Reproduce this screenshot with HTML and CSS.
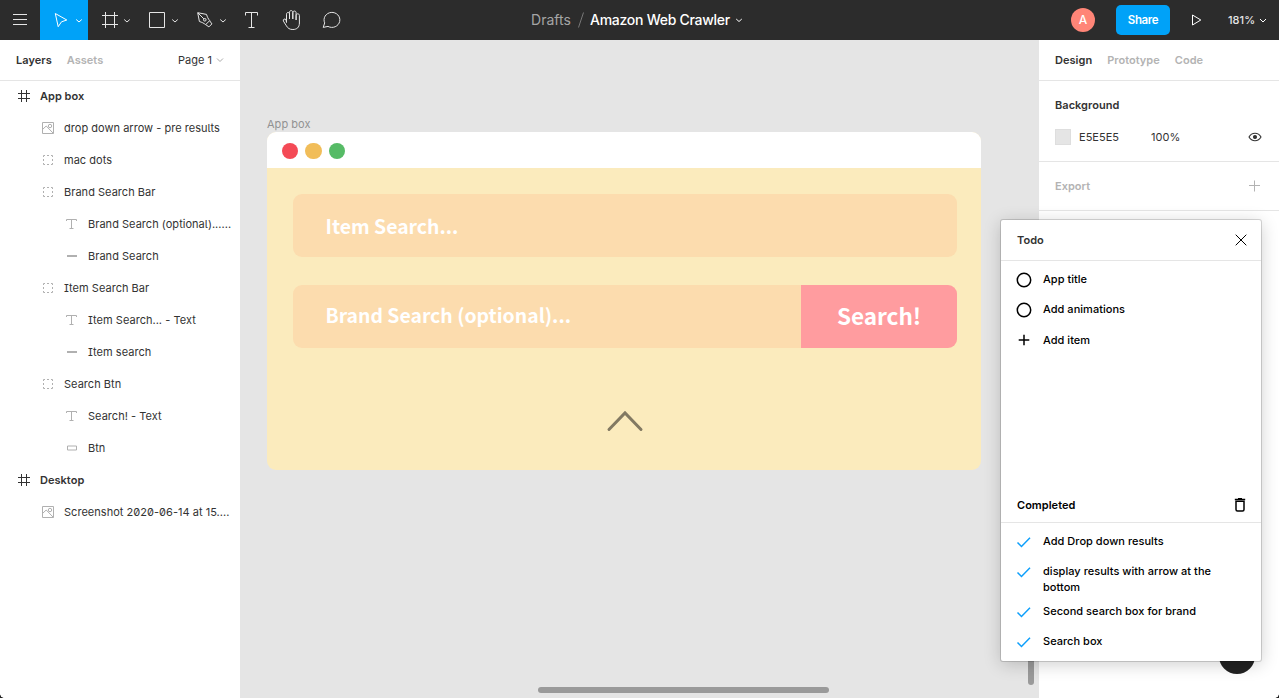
FILE: index.html
```html
<!DOCTYPE html>
<html lang="en">
<head>
<meta charset="utf-8">
<title>Amazon Web Crawler</title>
<link rel="stylesheet" href="styles.css">
</head>
<body>
<svg class="defs" aria-hidden="true">
  <symbol id="frame" viewBox="0 0 16 16"><path d="M5.5 2v12M10.5 2v12M2 5.5h12M2 10.5h12"/></symbol>
  <symbol id="image" viewBox="0 0 16 16"><path d="M2.5 2.5h11v11h-11zM3 9l3.2-3 7 7.2"/><circle cx="10" cy="6" r="1.7"/></symbol>
  <symbol id="group" viewBox="0 0 16 16"><path d="M3.5 5V3.500H5M7 3.500h2M11 3.500h1.500V5M12.500 7v2M12.500 11v1.500H11M9 12.500H7M5 12.500H3.500V11M3.500 9V7"/></symbol>
  <symbol id="text" viewBox="0 0 16 16"><path d="M2.500 5V3.500h10V5M7.500 3.500v9M5.500 12.500h4"/></symbol>
  <symbol id="line" viewBox="0 0 16 16"><path d="M3 8h10" stroke-width="2"/></symbol>
  <symbol id="bar" viewBox="0 0 16 16"><path d="M3.500 6h9v4h-9z"/></symbol>
  <symbol id="check" viewBox="0 0 16 16"><path d="M1.500 8.500l4 4L14 3.800" stroke-width="1.500"/></symbol>
</svg>
<div class="app">
  <header class="toolbar">
    <svg class="tool tool-sm" viewBox="0 0 40 40"><path d="M13 14.500h14M13 19.500h14M13 24.500h14"/></svg>
    <svg class="tool active" viewBox="0 0 48 40"><path d="M15.300 13.500L26.800 20l-5.300 1.800-3.300 4.900z"/><path d="M36.200 19.500L39 22l2.800-2.500"/></svg>
    <svg class="tool" viewBox="0 0 48 40"><path d="M17.500 12v16M26.500 12v16M14 15.500h16M14 24.500h16"/><path d="M36.200 19.500L39 22l2.800-2.500"/></svg>
    <svg class="tool" viewBox="0 0 48 40"><path d="M13.500 12.500h15v15h-15z"/><path d="M36.200 19.500L39 22l2.800-2.500"/></svg>
    <svg class="tool" viewBox="0 0 48 40"><path d="M13.700 12.700l8.800 1.700c.8 2.500 1.600 4.400 3.200 6.200l-4.100 4.100c-1.800-1.600-3.700-2.400-6.200-3.200zM13.900 12.900l6 6M25.600 20.700l2.300 3.200-3 3-3.200-2.300"/><circle cx="20.800" cy="19.800" r="1.300"/><path d="M36.200 19.500L39 22l2.800-2.500"/></svg>
    <svg class="tool tool-sm" viewBox="0 0 40 40"><path d="M13.500 15.500v-3h12v3M19.500 12.500v15M16.500 27.500h6"/></svg>
    <svg class="tool tool-sm" viewBox="0 0 40 40"><path d="M14.500 22.500v-8.300c0-2.300 3-2.300 3 0V19v-6.700c0-2.300 3.300-2.300 3.300 0V19v-6.300c0-2.200 3.300-2.200 3.300 0V20v-4.600c0-2.100 3.300-2.100 3.300 0V23c0 4.300-2.500 6.500-6.500 6.500-3.400 0-5-1.200-6.500-3.700l-3-4.700c-.8-2 1.500-2.800 2.600-1.400z"/></svg>
    <svg class="tool tool-sm" viewBox="0 0 40 40"><path d="M11.200 27.400l1.500-4.500a7.900 7.500 0 1 1 3.300 3.500z"/></svg>
    <div class="file"><span class="drafts">Drafts</span><svg class="slash" viewBox="0 0 8 16"><path d="M1.500 15.500L6.500.5"/></svg><span class="name">Amazon Web Crawler</span><svg class="chev" viewBox="0 0 8 8"><path d="M1.200 3L4 5.500 6.800 3"/></svg></div>
    <span class="avatar">A</span>
    <span class="share">Share</span>
    <svg class="play" viewBox="0 0 12 12"><path d="M1.500 1L9.800 6 1.500 11z"/></svg>
    <span class="zoom">181%</span><svg class="chev zoom-chev" viewBox="0 0 8 8"><path d="M1 3l3 3 3-3"/></svg>
  </header>
  <div class="main">
    <aside class="layers">
      <div class="tabs"><b>Layers</b><b class="off">Assets</b><span class="page">Page 1</span><svg class="chev" viewBox="0 0 8 8"><path d="M1 2.500l3 3 3-3"/></svg></div>
      <ul class="tree">
        <li class="top"><svg><use href="#frame"/></svg><span>App box</span></li>
        <li class="l1"><svg><use href="#image"/></svg><span>drop down arrow - pre results</span></li>
        <li class="l1"><svg><use href="#group"/></svg><span>mac dots</span></li>
        <li class="l1"><svg><use href="#group"/></svg><span>Brand Search Bar</span></li>
        <li class="l2"><svg><use href="#text"/></svg><span>Brand Search (optional)......</span></li>
        <li class="l2"><svg><use href="#line"/></svg><span>Brand Search</span></li>
        <li class="l1"><svg><use href="#group"/></svg><span>Item Search Bar</span></li>
        <li class="l2"><svg><use href="#text"/></svg><span>Item Search... - Text</span></li>
        <li class="l2"><svg><use href="#line"/></svg><span>Item search</span></li>
        <li class="l1"><svg><use href="#group"/></svg><span>Search Btn</span></li>
        <li class="l2"><svg><use href="#text"/></svg><span>Search! - Text</span></li>
        <li class="l2"><svg><use href="#bar"/></svg><span>Btn</span></li>
        <li class="top"><svg><use href="#frame"/></svg><span>Desktop</span></li>
        <li class="l1"><svg><use href="#image"/></svg><span>Screenshot 2020-06-14 at 15....</span></li>
      </ul>
    </aside>
    <main class="canvas">
      <div class="frame-label">App box</div>
      <section class="artboard">
        <div class="titlebar"><i class="dot red"></i><i class="dot yellow"></i><i class="dot green"></i></div>
        <div class="field"><span class="item">Item Search...</span></div>
        <div class="field second"><span class="brand">Brand Search (optional)...</span><div class="go"><span>Search!</span></div></div>
        <svg class="arrow" viewBox="0 0 38 22"><path d="M3 19.500L19 3l16 16.500"/></svg>
      </section>
      <div class="hscroll"></div>
      <div class="vscroll"></div>
    </main>
    <aside class="props">
      <div class="tabs"><b>Design</b><b class="off proto">Prototype</b><b class="off">Code</b></div>
      <section class="background">
        <b>Background</b>
        <div class="fill"><i class="swatch"></i><span class="hex">E5E5E5</span><span>100%</span><svg class="eye" viewBox="0 0 14 10"><path d="M1 5c2.800-5 9.200-5 12 0-2.800 5-9.200 5-12 0z"/><circle cx="7" cy="5" r="1.500"/></svg></div>
      </section>
      <section class="export"><b>Export</b><svg viewBox="0 0 12 12"><path d="M6.500 .5v11M1 5.500h11"/></svg></section>
      <span class="help">?</span>
    </aside>
  </div>
  <section class="todo">
    <header><b>Todo</b><svg viewBox="0 0 12 12"><path d="M.7.700l10.600 10.600M11.300.700L.7 11.300"/></svg></header>
    <ul class="open">
      <li><svg class="ring" viewBox="0 0 16 16"><circle cx="8" cy="8" r="6.700"/></svg><span>App title</span></li>
      <li><svg class="ring" viewBox="0 0 16 16"><circle cx="8" cy="8" r="6.700"/></svg><span>Add animations</span></li>
      <li class="add"><svg class="plus" viewBox="0 0 16 16"><path d="M8 2.700v10.600M2.700 8h10.600"/></svg><span>Add item</span></li>
    </ul>
    <div class="completed"><b>Completed</b><svg viewBox="0 0 12 14"><path class="lid" d="M.8 1.500h10.400"/><path class="grip" d="M4 .6h4"/><path d="M2 3.200h8v8.300q0 1.500-1.500 1.500h-5Q2 13 2 11.500z"/></svg></div>
    <ul class="done">
      <li><svg><use href="#check"/></svg><span>Add Drop down results</span></li>
      <li class="wrap"><svg><use href="#check"/></svg><span>display results with arrow at the bottom</span></li>
      <li><svg><use href="#check"/></svg><span>Second search box for brand</span></li>
      <li><svg><use href="#check"/></svg><span>Search box</span></li>
    </ul>
  </section>
  <i class="corner left"></i><i class="corner right"></i>
</div>
</body>
</html>
```
FILE: styles.css
```css
* { box-sizing: border-box; }
body {
  margin: 0;
  font: 11px/16px Inter, sans-serif;
  letter-spacing: 0.03px;
  color: #333;
  overflow: hidden;
}
b { font-weight: 600; }
ul { list-style: none; margin: 0; padding: 0; }
svg { display: block; flex: none; fill: none; stroke: currentColor; stroke-width: 1; }
.defs { position: absolute; width: 0; height: 0; }
.app { position: relative; width: 1279px; height: 698px; display: flex; flex-direction: column; overflow: hidden; }

.toolbar { height: 40px; flex: none; display: flex; align-items: center; background: #2c2c2c; color: #fff; }
.tool { width: 48px; height: 40px; color: #e6e6e6; }
.tool-sm { width: 40px; }
.active { background: #00a2f8; color: #fff; }
.file { display: flex; align-items: center; margin-left: 179px; width: 540px; font-size: 14px; }
.drafts { width: 46px; color: #a5a5a5; }
.slash { width: 8px; height: 16px; color: #777; }
.name { margin-left: 5px; width: 145px; font-weight: 500; letter-spacing: -0.27px; white-space: nowrap; }
.chev { width: 8px; height: 8px; }
.avatar { width: 24px; height: 24px; border-radius: 50%; background: #ff8577; font-size: 12px; line-height: 24px; text-align: center; font-weight: 500; }
.share { width: 54px; height: 30px; margin-left: 21px; border-radius: 5px; background: #00a2f8; font-size: 11.500px; font-weight: 600; letter-spacing: -0.35px; line-height: 30px; text-align: center; }
.play { width: 12px; height: 12px; margin-left: 21px; }
.zoom { width: 31px; margin-left: 25px; font-weight: 500; color: #e6e6e6; }

.main { flex: 1; display: flex; min-height: 0; }
.tabs { height: 41px; padding: 0 16px; display: flex; align-items: center; border-bottom: 1px solid #e5e5e5; }
.off { color: #b3b3b3; }
.layers { width: 241px; flex: none; border-right: 1px solid #e5e5e5; background: #fff; }
.layers .off { margin-left: 15px; }
.page { margin-left: auto; margin-right: 4px; }
.page + .chev { color: #aaa; }
.tree { margin-top: -1px; font-feature-settings: "ss02"; }
.tree li { height: 32px; display: flex; align-items: center; white-space: nowrap; }
.tree svg { width: 16px; height: 16px; margin-right: 8px; color: #b0b0b0; }
.top { padding-left: 16px; font-weight: 600; }
.tree .top svg { color: #333; }
.l1 { padding-left: 40px; }
.l2 { padding-left: 64px; }

.canvas { position: relative; width: 798px; flex: none; background: #e5e5e5; padding: 77px 0 0 26px; }
.frame-label { height: 15px; line-height: 15px; color: #929292; }
.artboard { width: 713.500px; height: 337.500px; border-radius: 9px; background: #fbebbd; overflow: hidden; font-family: "Noto Sans CJK SC", sans-serif; font-weight: 700; color: #fff; letter-spacing: 0; }
.titlebar { height: 36px; display: flex; align-items: center; gap: 7px; padding: 2px 0 0 14.600px; background: #fff; }
.dot { width: 16.600px; height: 16.600px; border-radius: 50%; }
.red { background: #f44a56; }
.yellow { background: #f1bd59; }
.green { background: #56bb66; }
.field { display: flex; align-items: center; height: 63px; margin: 26px 24px 0 26px; padding-left: 32.500px; border-radius: 9px; background: #fcdcae; overflow: hidden; font-size: 19.400px; line-height: 24px; white-space: nowrap; }
.second { margin-top: 28px; }
.brand { padding-bottom: 4px; }
.go { display: flex; align-items: center; justify-content: center; width: 156px; height: 63px; margin-left: auto; padding: 0 0 4px 1px; background: #ff9c9f; font-size: 22.500px; }
.arrow { width: 38px; height: 22px; margin: 61.500px 0 0 339px; color: #827962; stroke-width: 3; stroke-linecap: round; }
.hscroll { position: absolute; left: 297px; bottom: 5px; width: 291px; height: 6px; border-radius: 3px; background: #9a9a9a; }
.vscroll { position: absolute; right: 5px; bottom: 13px; width: 6px; height: 90px; border-radius: 3px; background: #9a9a9a; }

.props { position: relative; flex: 1; background: #fff; }
.proto { margin: 0 15px; }
.background { height: 81px; padding: 16px; border-bottom: 1px solid #e5e5e5; }
.background b { display: block; }
.fill { display: flex; align-items: center; margin-top: 16px; }
.swatch { width: 16px; height: 16px; background: #e5e5e5; border: 1px solid #dedede; }
.hex { width: 72px; margin-left: 8px; }
.eye { width: 14px; height: 10px; margin-left: auto; margin-right: 1px; stroke-width: 1.100; }
.eye circle { fill: currentColor; }
.export { height: 49px; padding: 0 19px 0 16px; display: flex; align-items: center; justify-content: space-between; border-bottom: 1px solid #e5e5e5; color: #b3b3b3; }
.export svg { width: 12px; height: 12px; }
.help { position: absolute; left: 180px; bottom: 24px; width: 36px; height: 36px; border-radius: 50%; background: #222; color: #fff; font-size: 14px; line-height: 36px; text-align: center; }

.todo { position: absolute; left: 1001px; top: 220px; width: 260px; height: 441px; background: #fff; border-radius: 2px; box-shadow: 0 0 0 1px rgba(0,0,0,.15), 0 3px 18px rgba(0,0,0,.2); color: #000; font-weight: 500; display: flex; flex-direction: column; }
.todo header { height: 41px; padding: 0 14px 0 16px; display: flex; align-items: center; justify-content: space-between; border-bottom: 1px solid #e5e5e5; }
.todo header b { color: #333; }
.todo header svg { width: 12px; height: 12px; }
.todo li { display: flex; padding: 0 16px 0 15px; margin-bottom: 14px; }
.todo li svg { width: 16px; height: 16px; margin-right: 11px; }
.open { padding-top: 10px; }
.open .add { padding-top: 1px; }
.ring { margin-top: 1px; stroke-width: 1.500; }
.plus { stroke-width: 1.500; }
.open li { height: 16px; }
.completed { height: 33px; margin-top: auto; display: flex; align-items: flex-start; justify-content: space-between; padding: 7px 15px 0 16px; border-bottom: 1px solid #e5e5e5; }
.completed svg { width: 12px; height: 14px; margin-top: 1px; stroke-width: 1.500; }
.done { height: 138px; padding-top: 10px; }
.done li { height: 16px; }
.done svg { color: #0d9ffb; margin-top: 1px; }
.done .wrap { height: 32px; margin-bottom: 8px; }
.corner { position: absolute; bottom: 0; width: 4px; height: 4px; }
.left { left: 0; background: radial-gradient(circle at 100% 0, transparent 3.500px, #222 4px); }
.right { right: 0; background: radial-gradient(circle at 0 0, transparent 3.500px, #222 4px); }
```
